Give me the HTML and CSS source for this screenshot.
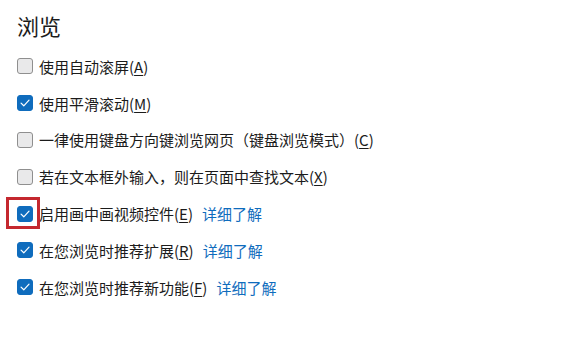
FILE: index.html
```html
<!DOCTYPE html>
<html lang="zh-CN">
<head>
<meta charset="utf-8">
<link rel="stylesheet" href="styles.css">
</head>
<body>
<div class="page">
  <h1 class="title">浏览</h1>
  <ul class="list">
    <li class="row"><span class="box"></span><span class="label">使用自动滚屏(<u>A</u>)</span></li>
    <li class="row"><span class="box on"><svg viewBox="0 0 16 16"><path d="M3.5 8.2 L6.6 11.2 L12.6 4.8" /></svg></span><span class="label">使用平滑滚动(<u>M</u>)</span></li>
    <li class="row"><span class="box"></span><span class="label">一律使用键盘方向键浏览网页（键盘浏览模式）(<u>C</u>)</span></li>
    <li class="row"><span class="box"></span><span class="label">若在文本框外输入，则在页面中查找文本(<u>X</u>)</span></li>
    <li class="row"><span class="boxwrap"><span class="box on"><svg viewBox="0 0 16 16"><path d="M3.5 8.2 L6.6 11.2 L12.6 4.8" /></svg></span><span class="mark"></span></span><span class="label">启用画中画视频控件(<u>E</u>)</span><a class="link" href="#">详细了解</a></li>
    <li class="row"><span class="box on"><svg viewBox="0 0 16 16"><path d="M3.5 8.2 L6.6 11.2 L12.6 4.8" /></svg></span><span class="label">在您浏览时推荐扩展(<u>R</u>)</span><a class="link" href="#">详细了解</a></li>
    <li class="row"><span class="box on"><svg viewBox="0 0 16 16"><path d="M3.5 8.2 L6.6 11.2 L12.6 4.8" /></svg></span><span class="label">在您浏览时推荐新功能(<u>F</u>)</span><a class="link" href="#">详细了解</a></li>
  </ul>
</div>
</body>
</html>
```
FILE: styles.css
```css
html, body {
  margin: 0;
  padding: 0;
  background: #ffffff;
}
body {
  font-family: "Noto Sans CJK SC", "Noto Sans", sans-serif;
  color: #1b1b1b;
}
.page {
  padding: 9px 0 0 17px;
}
.title {
  margin: 0;
  font-size: 22px;
  font-weight: 400;
  line-height: 32px;
  color: #1b1b1b;
}
.list {
  list-style: none;
  margin: 7px 0 0 0;
  padding: 0;
}
.row {
  display: flex;
  align-items: center;
  height: 36.8px;
  font-size: 15px;
}
.row u {
  text-decoration: underline;
  text-underline-offset: 2px;
}
.boxwrap {
  position: relative;
  display: flex;
}
.box {
  width: 16px;
  height: 16px;
  box-sizing: border-box;
  border-radius: 3px;
  border: 1px solid #8f8f8f;
  background: #e9e9ea;
  flex: none;
  display: flex;
}
.box.on {
  background: #0f6cbd;
  border-color: #0f6cbd;
}
.box svg {
  width: 14px;
  height: 14px;
  fill: none;
  stroke: #ffffff;
  stroke-width: 1.4;
  stroke-linecap: round;
  stroke-linejoin: round;
}
.mark {
  position: absolute;
  left: -11px;
  top: -9px;
  width: 34px;
  height: 32px;
  box-sizing: border-box;
  border: 3px solid #c4282f;
}
.label {
  margin-left: 6px;
  white-space: nowrap;
}
.link {
  margin-left: 9px;
  color: #0f6cbd;
  text-decoration: none;
  white-space: nowrap;
}
```
